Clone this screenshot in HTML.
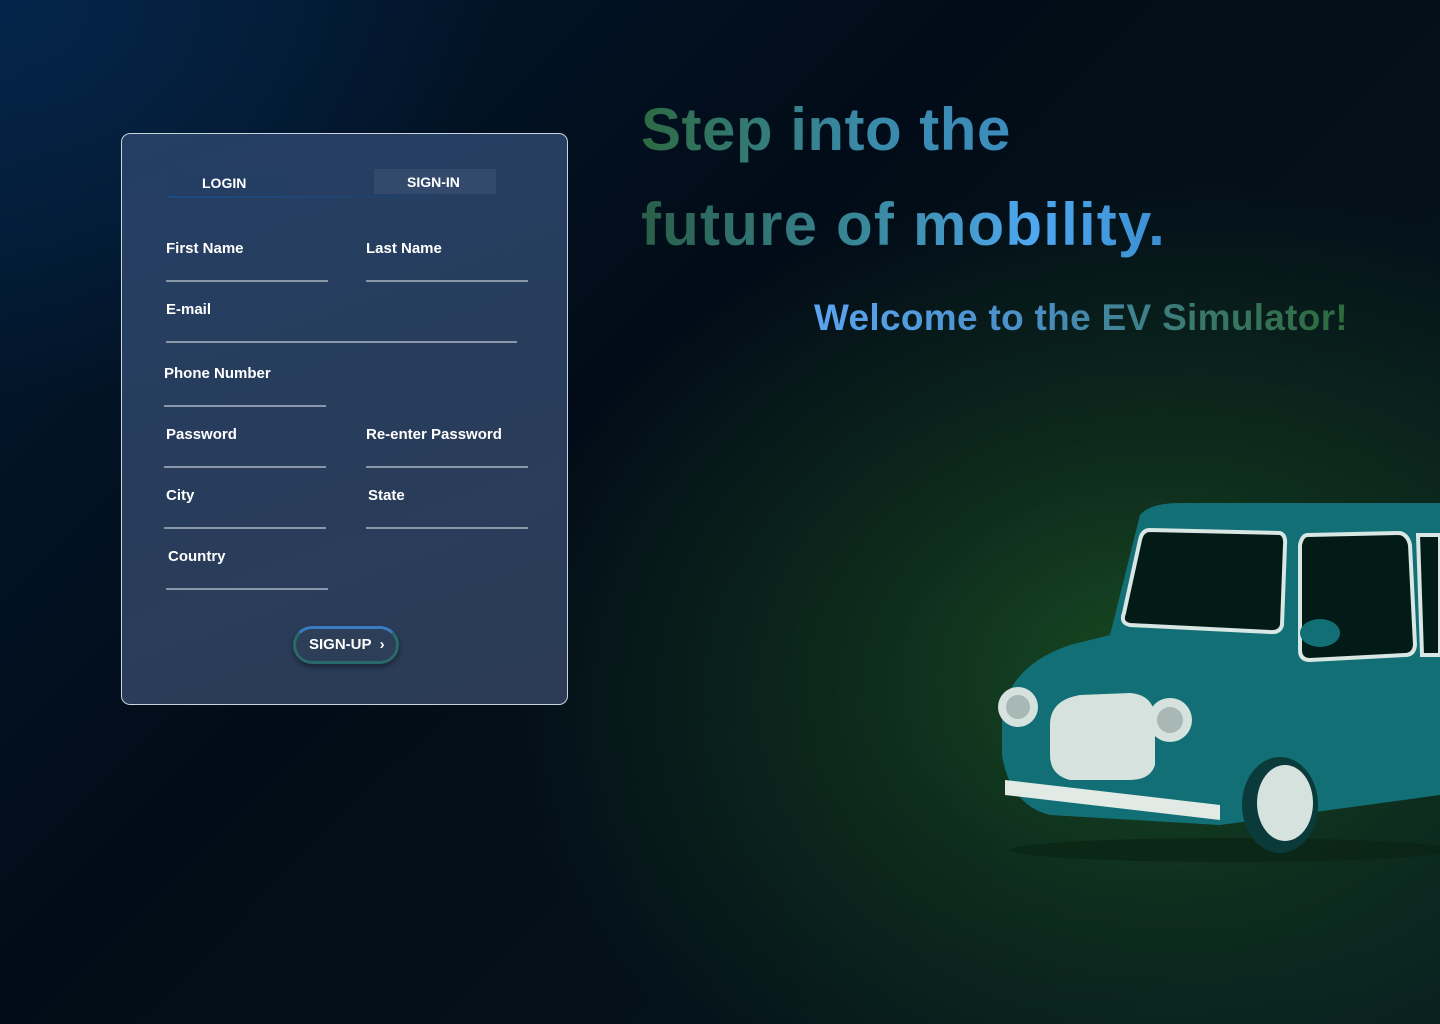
<!DOCTYPE html>
<html><head><style>
*{margin:0;padding:0;box-sizing:border-box}
body{width:1440px;height:1024px;overflow:hidden;font-family:"Liberation Sans",sans-serif;color:#fff;position:relative;
background:
radial-gradient(ellipse 650px 500px at 1150px 680px,#174a22 0%,rgba(20,60,30,.6) 45%,rgba(0,0,0,0) 100%),
radial-gradient(ellipse 500px 400px at 0px 0px,#04254a 0%,rgba(0,20,40,0) 100%),
linear-gradient(135deg,#031a33 0%,#020c18 40%,#04121a 70%,#061a22 100%);}
.card{position:absolute;left:121px;top:133px;width:447px;height:572px;border:1px solid #c9d2de;border-radius:9px;
background:linear-gradient(160deg,#243e64 0%,#283d5c 50%,#2c3c56 100%)}
.t{position:absolute;font-size:15px;font-weight:bold;}
.l{position:absolute;height:2px;background:#8a97a8}
.h{position:absolute;font-weight:bold;white-space:nowrap;-webkit-background-clip:text;background-clip:text;color:transparent}
</style></head><body>
<div class="card">
 <div style="position:absolute;left:46px;top:37px;width:122px;height:25px;background:#243d63"></div>
 <div style="position:absolute;left:252px;top:35px;width:122px;height:25px;background:#334a6c"></div>
 <div style="position:absolute;left:45px;top:62px;width:330px;height:2px;background:linear-gradient(90deg,#1d4c82,#233c60)"></div>
 <div class="t" style="left:80px;top:41px;font-size:14px">LOGIN</div>
 <div class="t" style="left:285px;top:40px;font-size:14px">SIGN-IN</div>
 <div class="t" style="left:44px;top:106px">First Name</div><div class="l" style="left:44px;top:146px;width:162px"></div>
 <div class="t" style="left:244px;top:106px">Last Name</div><div class="l" style="left:244px;top:146px;width:162px"></div>
 <div class="t" style="left:44px;top:167px">E-mail</div><div class="l" style="left:44px;top:207px;width:351px"></div>
 <div class="t" style="left:42px;top:231px">Phone Number</div><div class="l" style="left:42px;top:271px;width:162px"></div>
 <div class="t" style="left:44px;top:292px">Password</div><div class="l" style="left:42px;top:332px;width:162px"></div>
 <div class="t" style="left:244px;top:292px">Re-enter Password</div><div class="l" style="left:244px;top:332px;width:162px"></div>
 <div class="t" style="left:44px;top:353px">City</div><div class="l" style="left:42px;top:393px;width:162px"></div>
 <div class="t" style="left:246px;top:353px">State</div><div class="l" style="left:244px;top:393px;width:162px"></div>
 <div class="t" style="left:46px;top:414px">Country</div><div class="l" style="left:44px;top:454px;width:162px"></div>
 <div style="position:absolute;left:171px;top:492px;width:106px;height:38px;border-radius:19px;border:3px solid #2b6a6a;border-top-color:#3b7cc0;background:#2c3e58;box-shadow:0 3px 6px rgba(0,0,0,.4);font-size:15px;font-weight:bold;line-height:32px;padding-left:13px">SIGN-UP &nbsp;›</div>
</div>
<div class="h" style="left:641px;top:95px;font-size:60px;letter-spacing:0.5px;background-image:linear-gradient(90deg,#2d6a42,#3a8aa8 60%,#3c8cc0)">Step into the</div>
<div class="h" style="left:641px;top:190px;font-size:60px;letter-spacing:1.2px;background-image:linear-gradient(90deg,#2a5e48,#3a8aa0 45%,#4ea8f0 75%,#3a8ed0)">future of mobility.</div>
<div class="h" style="left:814px;top:297px;font-size:37px;letter-spacing:0.3px;background-image:linear-gradient(90deg,#5aa4f0,#4a90c8 40%,#3a7a70 70%,#2e6a3a)">Welcome to the EV Simulator!</div>
<svg style="position:absolute;left:990px;top:495px" width="450" height="370" viewBox="0 0 450 370">
 <ellipse cx="240" cy="355" rx="220" ry="12" fill="#0a2414" opacity=".7"/>
 <path d="M150 20 Q160 8 190 8 L450 8 L450 300 L230 330 L60 320 Q20 310 12 260 L12 220 Q20 170 80 150 L120 140 Z" fill="#136f76"/>
 <path d="M160 35 L290 38 Q296 40 295 50 L292 130 Q290 138 280 137 L140 130 Q130 128 134 118 L150 45 Q152 35 160 35Z" fill="#031b17" stroke="#d8e6e4" stroke-width="4"/>
 <path d="M318 40 L410 38 Q418 40 420 50 L425 150 Q424 160 415 160 L320 165 Q310 165 310 155 L310 50 Q312 40 318 40Z" fill="#031b17" stroke="#d8e6e4" stroke-width="4"/>
 <path d="M428 40 L450 40 L450 160 L432 160Z" fill="#031b17" stroke="#d8e6e4" stroke-width="4"/>
 <path d="M60 230 Q60 205 90 200 L140 198 Q165 200 165 225 L165 270 Q160 285 140 285 L80 285 Q60 280 60 260Z" fill="#d6e2de"/>
 <circle cx="28" cy="212" r="20" fill="#d6e2de"/><circle cx="28" cy="212" r="12" fill="#a8b8b4"/>
 <circle cx="180" cy="225" r="22" fill="#d6e2de"/><circle cx="180" cy="225" r="13" fill="#a8b8b4"/>
 <path d="M15 285 L230 310 L230 325 L15 300Z" fill="#e2eae6"/>
 <ellipse cx="290" cy="310" rx="38" ry="48" fill="#0b3a3a"/><ellipse cx="295" cy="308" rx="28" ry="38" fill="#d6e2de"/>
 <ellipse cx="330" cy="138" rx="20" ry="14" fill="#136f76"/>
</svg>
</body></html>
